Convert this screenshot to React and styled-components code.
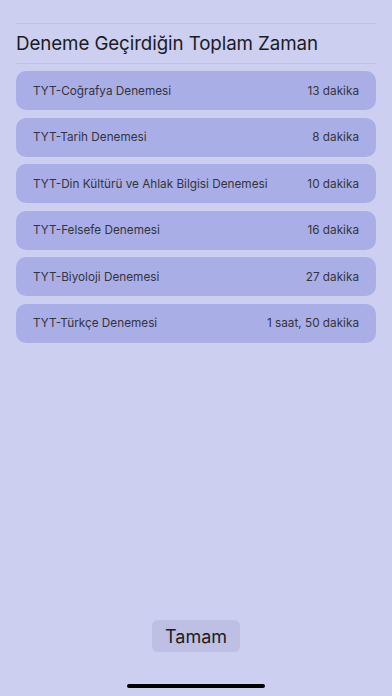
import React from 'react';
import styled, { createGlobalStyle } from 'styled-components';

const GlobalStyle = createGlobalStyle`
    html, body {
        margin: 0;
        padding: 0;
        background-color: #cdcff1;
        font-family: Inter, "Noto Sans", sans-serif;
    }
`;

const sessions = [
    { id: 1, name: 'TYT-Coğrafya Denemesi', time: '13 dakika' },
    { id: 2, name: 'TYT-Tarih Denemesi', time: '8 dakika' },
    { id: 3, name: 'TYT-Din Kültürü ve Ahlak Bilgisi Denemesi', time: '10 dakika' },
    { id: 4, name: 'TYT-Felsefe Denemesi', time: '16 dakika' },
    { id: 5, name: 'TYT-Biyoloji Denemesi', time: '27 dakika' },
    { id: 6, name: 'TYT-Türkçe Denemesi', time: '1 saat, 50 dakika' },
];

export default function App() {
    return (
        <>
            <GlobalStyle />
            <Screen>
                <Header>
                    <Title>Deneme Geçirdiğin Toplam Zaman</Title>
                </Header>
                <List>
                    {sessions.map(s => (
                        <Row key={s.id}>
                            <RowName>{s.name}</RowName>
                            <RowTime>{s.time}</RowTime>
                        </Row>
                    ))}
                </List>
                <Footer>
                    <DoneButton>Tamam</DoneButton>
                </Footer>
                <HomeIndicator />
            </Screen>
        </>
    );
}

const Screen = styled.main`
    width: 392px;
    height: 696px;
    display: flex;
    flex-direction: column;
    padding: 23px 16px 0;
    box-sizing: border-box;
    background-color: #cdcff1;
`;

const Header = styled.header`
    height: 39px;
    display: flex;
    align-items: center;
    border-top: 1px solid #bfc1e6;
    border-bottom: 1px solid #bfc1e6;
`;

const Title = styled.h1`
    margin: 0;
    font-size: 18.75px;
    font-weight: 400;
    color: #1c1c24;
    letter-spacing: -0.1px;
`;

const List = styled.section`
    display: flex;
    flex-direction: column;
    gap: 7.5px;
    margin-top: 7px;
`;

const Row = styled.div`
    height: 39px;
    display: flex;
    align-items: center;
    justify-content: space-between;
    padding: 0 17px;
    border-radius: 10px;
    background-color: #aaaee6;
    font-size: 11.75px;
    color: #34343c;
`;

const RowName = styled.span``;

const RowTime = styled.span``;

const Footer = styled.footer`
    margin-top: auto;
    display: flex;
    justify-content: center;
    padding-bottom: 32px;
`;

const DoneButton = styled.button`
    width: 88px;
    height: 32px;
    border: none;
    border-radius: 6px;
    background-color: #bdbfe3;
    font-family: Inter, "Noto Sans", sans-serif;
    font-size: 18px;
    color: #1c1c24;
    padding: 0;
`;

const HomeIndicator = styled.div`
    align-self: center;
    width: 138px;
    height: 4px;
    border-radius: 2px;
    background-color: #000;
    margin-bottom: 8px;
`;
